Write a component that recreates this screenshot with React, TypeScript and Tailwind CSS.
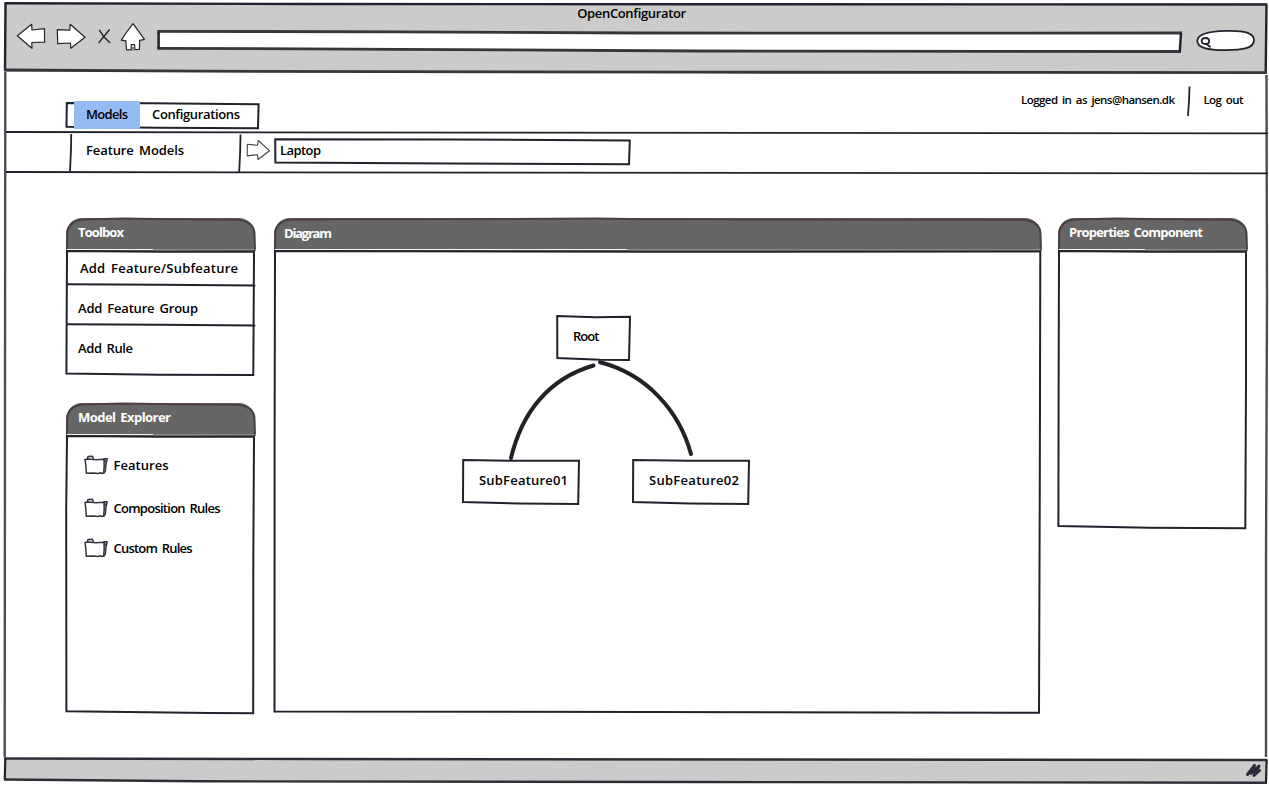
import { useLayoutEffect, useRef } from "react";
import type { ReactNode } from "react";

const INK = "#20232b";

function Label({ children, width, className = "" }: { children: string; width: number; className?: string }) {
  const ref = useRef<HTMLSpanElement>(null);
  useLayoutEffect(() => {
    const el = ref.current;
    if (!el) return;
    el.style.letterSpacing = "0px";
    const natural = el.getBoundingClientRect().width;
    el.style.letterSpacing = `${(width - natural) / Math.max(1, children.length - 1)}px`;
  }, [children, width]);
  return (
    <span ref={ref} className={`block w-max shrink-0 whitespace-nowrap leading-5 [word-spacing:2px] ${className}`}>
      {children}
    </span>
  );
}

/** Hand-drawn strokes laid over a box; x/y give the origin of the drawing's coordinates. */
function Ink({ x, y, w, h, children }: { x: number; y: number; w: number; h: number; children: ReactNode }) {
  return (
    <svg
      className="pointer-events-none absolute left-0 top-0 overflow-visible"
      width={w}
      height={h}
      viewBox={`${x} ${y} ${w} ${h}`}
      fill="none"
      stroke={INK}
      strokeWidth="2"
      strokeLinecap="butt"
      strokeLinejoin="miter"
      aria-hidden="true"
    >
      {children}
    </svg>
  );
}

function PanelHead({ w, title, width, className }: { w: number; title: string; width: number; className: string }) {
  const r = w - 1;
  const m = Math.round(w * 0.46);
  return (
    <div className="relative -mb-px h-[33px] shrink-0 rounded-t-[16px] bg-[#666]">
      <div className={`font-bold text-white ${className}`}>
        <Label width={width}>{title}</Label>
      </div>
      <Ink x={0} y={0} w={w} h={33}>
        <path
          d={`M1 31 L1.2 16 Q2 3 17 1.6 L${m - 30} .6 L${m + 20} 1.3 L${r - 18} 1.8 Q${r - 1} 3 ${r - 0.5} 16 L${r} 33`}
          stroke="#4c3f43"
          strokeWidth="2"
        />
        <path d={`M1 31.5 H${m}`} stroke="#f4f4ee" strokeWidth="1" />
        <path d={`M${m} 32 H${r + 1}`} stroke="#a9a9a0" strokeWidth="1" />
      </Ink>
    </div>
  );
}

function FolderIcon() {
  return (
    <svg width="24" height="20" viewBox="0 0 24 20" fill="none" stroke="#33323f" strokeWidth="1.5" strokeLinejoin="round" strokeLinecap="round" aria-hidden="true">
      <path d="M1 4.6 L1.8 10 L2.3 18.3 L10 18 L14 18.6 L16 17.7 L18 18.5 L19.7 17.7 L20.2 11 L20 4.3 L12 4.7 L4 4 Z" />
      <path d="M3.4 4 L4 1.5 L8.4 1.2 L9.3 3.5 M20 3.8 L23.2 3.7 L22 9 L21.3 16 L20 18 M20.4 4.5 L21.3 7" />
    </svg>
  );
}

const rowArrow = "M1.3 5.3 L11.5 6.3 L12.3 1.5 L23.5 11.7 L12 20.5 L11.5 15.7 L1.2 16.9 Z";

function BrowserBar() {
  return (
    <header className="relative h-[69px] shrink-0 bg-[#cbcbcb] text-[13px]">
      <div className="flex h-[19px] justify-center pr-[9px]">
        <Label width={109}>OpenConfigurator</Label>
      </div>
      <div className="flex h-8 items-start pl-[11px]">
        <svg className="mt-px" width="30" height="28" viewBox="16 23 30 28" fill="#fff" stroke={INK} strokeWidth="1.2" strokeLinejoin="round">
          <path d="M17.3 35.7 L31.7 24.3 L32 30 L44.5 28.6 L44.6 42.2 L31.8 42.5 L32 48.3 L24 41.5 Z" />
        </svg>
        <svg className="ml-[10px] mt-px" width="30" height="28" viewBox="56 23 30 28" fill="#fff" stroke={INK} strokeWidth="1.2" strokeLinejoin="round">
          <path d="M57.3 29.6 L69.8 30.2 L70.2 24.3 L85 37.3 L70.8 48.3 L70.5 43 L57.7 43.6 Z" />
        </svg>
        <svg className="ml-[11px] mt-1.5" width="15" height="18" viewBox="97 28 15 18" fill="none" stroke={INK} strokeWidth="1.4" strokeLinecap="round">
          <path d="M99.5 30.3 L104 37 L109.7 42.6 M109.3 29.8 L103.5 37 L99 42.5" />
        </svg>
        <svg className="ml-2" width="26" height="30" viewBox="120 22 26 30" fill="#fff" stroke={INK} strokeWidth="1.2" strokeLinejoin="round">
          <path d="M133 23.6 L144.4 39.4 L139.6 40.4 L139.4 49.4 L126.5 49.8 L125.8 40.8 L121.3 40.2 L126 33 Z" />
          <path d="M131.3 49.5 L131.2 44.7 L134.5 44.5 L135 49.5 M133 49 L133 47" />
        </svg>
        <div className="relative ml-[11px] mt-2 h-[22px] w-[1025px]">
          <Ink x={157} y={30} w={1025} h={22}>
            <path d="M158.3 31.3 L640 33 L1181 33 L1180 51.5 L700 51 L158.3 48.3 Z" fill="#fff" stroke="none" />
            <path d="M157.3 31.3 L400 31.8 L640 33 L900 33.2 L1182 33" stroke="#33363a" strokeWidth="2.8" />
            <path d="M157.3 48.3 L400 49.3 L700 51 L1181 51.5" stroke="#33363a" strokeWidth="2.8" />
            <path d="M158.6 31.5 V48.5 M1181 33 L1179.8 51.5" strokeWidth="2.5" />
          </Ink>
        </div>
        <svg className="ml-[13px] mt-[7px]" width="62" height="24" viewBox="1195 29 62 24" fill="none" stroke={INK} strokeWidth="1.8">
          <path d="M1197.3 40.5 C1198 33 1212 31.2 1226 30.9 C1245 30.3 1253.8 33 1254 40 C1254 48.5 1243 50 1225 50.2 C1208 50 1197 48 1197.3 40.5 Z" fill="#fff" />
          <path d="M1201.6 41 C1202 37 1209 37 1209.2 41 C1209.2 45 1201.8 45 1201.6 41 Z M1206.5 44 L1210.6 47.3" />
        </svg>
      </div>
      <Ink x={5} y={3} w={1262} h={69}>
        <path d="M4.5 3.2 L300 4 L700 4.2 L1267.3 4.5 M1266.5 4.5 L1265.7 72.5" strokeWidth="2.4" />
        <path d="M5.5 3 L5 70" strokeWidth="2.4" />
        <path d="M4 70 L200 71.2 L700 72.2 L1267 72.6" stroke="#33363a" strokeWidth="2.8" />
      </Ink>
    </header>
  );
}

function Navigation() {
  return (
    <>
      <div className="flex h-[61px] shrink-0 items-start justify-between pl-[61px] pr-[22px]">
        <nav className="relative mt-[29px] flex h-[28px] w-[193px] pl-2 text-[13px]">
          <Ink x={66} y={101} w={193} h={28}>
            <path d="M66.8 103 L150 103.3 L258.6 104.3 L258 128.2 L160 127.8 L66.5 126.8 Z" />
          </Ink>
          <div className="relative h-[28px] w-[66px] bg-[#94bbf2] pl-3 pt-[3px]">
            <Label width={42}>Models</Label>
          </div>
          <div className="pl-3 pt-[3px]">
            <Label width={88}>Configurations</Label>
          </div>
        </nav>
        <div className="relative flex w-[224px] pt-[18px] text-[11.5px]">
          <Label width={154}>Logged in as jens@hansen.dk</Label>
          <div className="ml-[29px]">
            <Label width={40}>Log out</Label>
          </div>
          <Ink x={1021} y={72} w={224} h={50}>
            <path d="M1189.5 86.5 L1189 101 L1188 116" strokeWidth="1.8" />
          </Ink>
        </div>
      </div>
      <div className="relative flex h-10 shrink-0 items-start pl-[81px] pt-[6px] text-[13px]">
        <div className="w-[160px] pt-px">
          <Label width={98}>Feature Models</Label>
        </div>
        <svg width="25" height="22" viewBox="0 0 25 22" fill="#fff" stroke="#444" strokeWidth="1.1" strokeLinejoin="round">
          <path d={rowArrow} />
        </svg>
        <div className="relative ml-[3px] h-[26px] w-[356px] pl-[6px] pt-px">
          <Ink x={274} y={139} w={356} h={26}>
            <path d="M275.2 139.3 L450 139.5 L629.8 140.4 L629 164.3 L450 163.6 L275.4 162.6 Z" />
          </Ink>
          <Label width={41}>Laptop</Label>
        </div>
        <Ink x={5} y={133} w={1262} h={40}>
          <path d="M6 132 L500 132.7 L1268 133.3 M6 172 L500 172.6 L1268 173.3" strokeWidth="1.8" />
          <path d="M71.2 134 L71 150 L70 171 M240.5 134.5 L240.2 150 L239.2 172" strokeWidth="1.8" />
        </Ink>
      </div>
    </>
  );
}

const folders = [
  { name: "Features", width: 55, row: "h-[43px]" },
  { name: "Composition Rules", width: 107, row: "h-10" },
  { name: "Custom Rules", width: 79, row: "h-10" },
];

function Sidebar() {
  return (
    <aside className="flex w-[189px] shrink-0 flex-col">
      <section className="relative flex h-[158px] flex-col">
        <PanelHead w={190} title="Toolbox" width={46} className="pl-3 pt-1" />
        <ul className="flex flex-col pl-3">
          <li className="h-[35px] pl-[2px] pt-2">
            <Label width={158}>Add Feature/Subfeature</Label>
          </li>
          <li className="h-10 pt-[13px]">
            <Label width={120}>Add Feature Group</Label>
          </li>
          <li className="h-10 pt-[13px]">
            <Label width={55}>Add Rule</Label>
          </li>
        </ul>
        <Ink x={66} y={218} w={189} h={158}>
          <path d="M67 251 L160 251.7 L254 251.5 L253.3 375 L160 374.7 L66.4 373.4 Z" />
          <path d="M66 284.3 L160 284.7 L255.3 285.5 M66 324.3 L160 324.7 L255.3 325.5" />
        </Ink>
      </section>
      <section className="relative mt-[27px] flex h-[311px] flex-col">
        <PanelHead w={190} title="Model Explorer" width={93} className="pl-3 pt-1" />
        <ul className="flex flex-col pl-[18px] pt-5">
          {folders.map((f) => (
            <li key={f.name} className={`flex items-start ${f.row}`}>
              <FolderIcon />
              <div className="pl-[5.5px]">
                <Label width={f.width}>{f.name}</Label>
              </div>
            </li>
          ))}
        </ul>
        <Ink x={66} y={403} w={189} h={311}>
          <path d="M67 436 L160 436.7 L254 436.5 L253.3 560 L253.2 713.3 L210 713 L66.4 711.2 L66.2 510 Z" />
        </Ink>
      </section>
    </aside>
  );
}

function Diagram() {
  return (
    <section className="relative ml-[19px] flex h-[496px] w-[767px] shrink-0 flex-col">
      <PanelHead w={768} title="Diagram" width={48} className="pl-[10px] pt-[5px]" />
      <Ink x={274} y={218} w={767} h={496}>
        <path d="M275 251 L650 251.8 L1040.3 251.6 L1039.8 480 L1039 712.8 L650 712 L274.5 711.4 L274.6 450 Z" />
        <path d="M557.2 316 L595 317.3 L630 316.8 L629 360 L600 359.7 L557.3 358 Z" />
        <path d="M463.2 460 L520 460.8 L579 460.7 L578.2 504 L520 503.6 L463 502 Z" />
        <path d="M633.2 460 L690 460.8 L749 460.7 L748.2 504 L690 503.6 L633 502 Z" />
        <path
          d="M593.5 365.5 C549 378.5 522 412 511 458 M600 362.3 C646 374 679 410 691 454"
          strokeWidth="4"
          stroke="#212126"
          strokeLinecap="round"
        />
      </Ink>
      <div className="absolute left-[283px] top-[98px] flex h-[44px] w-[73px] pl-[16px] pt-[10px]">
        <Label width={26.5}>Root</Label>
      </div>
      <div className="absolute left-[189px] top-[242px] flex h-[44px] w-[116px] pl-[16px] pt-[10px]">
        <Label width={89}>SubFeature01</Label>
      </div>
      <div className="absolute left-[359px] top-[242px] flex h-[44px] w-[116px] pl-[16px] pt-[10px]">
        <Label width={90}>SubFeature02</Label>
      </div>
    </section>
  );
}

function Properties() {
  return (
    <section className="relative ml-[17px] flex h-[310px] w-[189px] shrink-0 flex-col">
      <PanelHead w={190} title="Properties Component" width={134} className="pl-[11px] pt-1" />
      <Ink x={1058} y={218} w={189} h={310}>
        <path d="M1059 251 L1150 251.7 L1246 251.5 L1246 380 L1245.3 528.3 L1150 527.8 L1058.4 526 L1058.6 400 Z" />
      </Ink>
    </section>
  );
}

export default function App() {
  return (
    <div className="h-[785px] w-[1269px] overflow-hidden bg-white pl-[5px] pt-[3px] font-['Comic_Sans_MS','Open_Sans',sans-serif] font-semibold text-black">
      <div className="relative flex h-[780px] w-[1262px] flex-col">
        <Ink x={5} y={3} w={1262} h={780}>
          <path d="M5.3 72 L5 400 L4.7 757 M1266.5 75 L1267 300 L1266 560 L1266 757" stroke="#4b4d55" strokeWidth="2.4" />
        </Ink>
        <BrowserBar />
        <Navigation />
        <main className="flex grow items-start pl-[61px] pt-[45px] text-[13px]">
          <Sidebar />
          <Diagram />
          <Properties />
        </main>
        <footer className="relative flex h-[24px] shrink-0 items-start justify-end pr-[5px] pt-[3px]">
          <Ink x={5} y={759} w={1262} h={24}>
            <path d="M5 758.5 L1266.5 760 L1266 782.7 L700 782 L200 781.3 L5 779.5 Z" fill="#cbcbcb" stroke="none" />
            <path d="M4 758.5 L300 759 L1267.5 760 M4 779.5 L200 781.3 L700 782 L1267 782.7" stroke="#2c2f35" strokeWidth="2.4" />
            <path d="M5.3 758.5 L4.8 779.5 M1266.6 760 L1266 782.5" strokeWidth="2.2" />
          </Ink>
          <svg className="relative" width="17" height="17" viewBox="0 0 17 17" fill="none" stroke="#2b2a3a" strokeWidth="3" strokeLinecap="round" strokeLinejoin="round">
            <path d="M2.5 12.5 L9.5 3.5 L6 11.5 L14 4 L9 13.5 L14.5 8.5" />
          </svg>
        </footer>
      </div>
    </div>
  );
}
